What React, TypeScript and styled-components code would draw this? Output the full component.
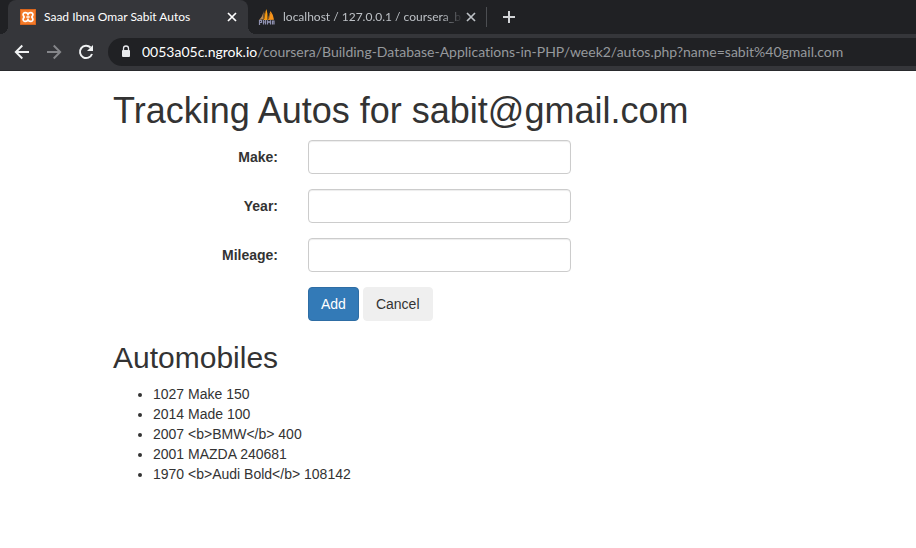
import React from 'react';
import styled, { createGlobalStyle } from 'styled-components';

const GlobalStyle = createGlobalStyle`
  *, *::before, *::after { box-sizing: border-box; }
  body {
    margin: 0;
    background: #fff;
    color: #333;
    font: 14px/20px "Liberation Sans", Arial, sans-serif;
    overflow-x: hidden;
  }
  button, input { font: inherit; color: inherit; }
`;

const Browser = styled.header`
  font-family: Lato, "Noto Sans", sans-serif;
  font-variant-ligatures: none;
  background: #35363a;
  border-bottom: 1px solid #292a2d;
`;

const TabStrip = styled.div`
  display: flex;
  height: 34px;
  padding-left: 8px;
  background: #202124;
`;

const Tab = styled.div<{ $active?: boolean }>`
  position: relative;
  display: flex;
  align-items: center;
  gap: 8px;
  width: ${p => (p.$active ? 240 : 238)}px;
  padding: 0 10px;
  padding-right: ${p => (p.$active ? 10 : 9)}px;
  padding-left: ${p => (p.$active ? 12 : 10)}px;
  border-radius: 8px 8px 0 0;
  background: ${p => (p.$active ? '#35363a' : 'transparent')};
  color: ${p => (p.$active ? '#fff' : '#bdc1c6')};

  > svg { flex: none; }

  &::before, &::after {
    content: ${p => (p.$active ? '""' : 'none')};
    position: absolute;
    bottom: 0;
    width: 8px;
    height: 8px;
  }
  &::before {
    right: 100%;
    background: radial-gradient(circle at 0 0, transparent 8px, #35363a 8px);
  }
  &::after {
    left: 100%;
    background: radial-gradient(circle at 100% 0, transparent 8px, #35363a 8px);
  }
`;

const TabTitle = styled.span<{ $fade?: boolean }>`
  flex: 1;
  min-width: 0;
  margin-right: ${p => (p.$fade ? -6 : 0)}px;
  white-space: nowrap;
  font-size: 12px;
  line-height: 16px;
  mask-image: ${p => (p.$fade ? 'linear-gradient(to right, #000 88%, transparent)' : 'none')};
`;

const IconButton = styled.button<{ $size: number }>`
  display: grid;
  place-items: center;
  flex: none;
  width: ${p => p.$size}px;
  height: ${p => p.$size}px;
  padding: 0;
  border: 0;
  border-radius: 50%;
  background: none;
  color: inherit;
`;

const Separator = styled.span`
  width: 1px;
  height: 20px;
  margin: 7px 8px 0 0;
  background: #4c4e52;
`;

const NewTab = styled(IconButton)`
  align-self: center;
  color: #d2d4d7;
`;

const Toolbar = styled.div`
  display: flex;
  align-items: center;
  gap: 4px;
  height: 36px;
  padding-left: 8px;
  color: #f1f3f4;
`;

const NavButton = styled(IconButton)`
  &:disabled { color: #85868a; }
`;

const AddressBar = styled.div`
  display: flex;
  align-items: center;
  flex: 1;
  gap: 10px;
  height: 28px;
  margin-left: 4px;
  padding-left: 12px;
  border-radius: 14px 0 0 14px;
  background: #202124;
`;

const Address = styled.div`
  flex: 1;
  overflow: hidden;
  white-space: nowrap;
  font-size: 14px;
  line-height: 20px;
  color: #96999d;
  outline: none;
`;

const Host = styled.span`
  color: #fff;
`;

const Container = styled.main`
  padding: 20px 15px 10px 113px;
`;

const Title = styled.h1`
  margin: 0 0 9px;
  font-size: 36px;
  font-weight: 400;
  line-height: 40px;
`;

const Form = styled.form`
  display: grid;
  gap: 15px;
`;

const FormRow = styled.div`
  display: grid;
  grid-template-columns: 165px minmax(0, 263px);
  column-gap: 30px;
`;

const Label = styled.label`
  padding-top: 7px;
  font-weight: 700;
  text-align: right;
`;

const TextInput = styled.input`
  width: 100%;
  height: 34px;
  padding: 6px 12px;
  border: 1px solid #ccc;
  border-radius: 4px;
  background: #fff;
  box-shadow: inset 0 1px 1px rgba(0, 0, 0, 0.075);
`;

const Actions = styled.div`
  display: flex;
  grid-column: 2;
  gap: 4px;
`;

const Button = styled.button<{ $primary?: boolean }>`
  height: 34px;
  padding: 6px 12px;
  border: 1px solid ${p => (p.$primary ? '#2e6da4' : '#efefef')};
  border-radius: 4px;
  background: ${p => (p.$primary ? '#337ab7' : '#efefef')};
  color: ${p => (p.$primary ? '#fff' : '#333')};
`;

const Subtitle = styled.h2`
  margin: 20px 0 10px;
  font-size: 30px;
  font-weight: 400;
  line-height: 33px;
`;

const AutoList = styled.ul`
  margin: 0;
  padding-left: 40px;
`;

const XamppIcon = () => (
  <svg width="16" height="16" viewBox="0 0 16 16" aria-hidden="true">
    <rect width="16" height="16" rx="1" fill="#f47b2a" />
    <rect x=".5" y=".5" width="15" height="15" rx="1" fill="none" stroke="#d9651c" />
    <path
      d="M8 5.200C7.200 3.600 6 3.600 5 3.700 3.400 3.900 2.700 5.200 3.300 6.500L4.200 8l-.9 1.500c-.6 1.300.1 2.600 1.700 2.800 1 .1 2.200.1 3-1.500.8 1.600 2 1.600 3 1.500 1.600-.2 2.300-1.500 1.700-2.800L11.800 8l.9-1.500c.6-1.300-.1-2.600-1.700-2.800-1-.1-2.200-.1-3 1.500ZM6.300 8h3.400M8 5v1.500M8 9.500V11"
      fill="none" stroke="#fff" strokeWidth="1.700" strokeLinejoin="round"
    />
  </svg>
);

const SailsIcon = () => (
  <svg width="17" height="16" viewBox="0 0 17 16" aria-hidden="true">
    <path d="M5.500 2Q5 7 1 11l4.500-.8Z" fill="#b98a55" />
    <path d="M8.500 0Q5.800 5 5.500 11h4Q10 5 8.500 0Z" fill="#f89c0e" />
    <path d="M12.500 2q-1.500 4-2.500 9l6-.3Q15 5 12.500 2Z" fill="#f7931a" />
    <path d="M7.500 2q-1 4-1.500 8M12 4q-1 3-1.500 6" stroke="#825620" fill="none" />
    <path
      d="M1.500 16v-4.500h2v2h-2M5.500 11v4.500M5.500 13h2M7.500 11v4.500M9.500 15.500V12l1.500 1.500 1.500-1.500v3.500M14.500 15.500V12H16v3.500"
      fill="none" stroke="#8f91b0" strokeWidth="1.200"
    />
  </svg>
);

const CloseIcon = () => (
  <svg width="10" height="10" viewBox="0 0 10 10" fill="none" stroke="currentColor" strokeWidth="1.700" aria-hidden="true">
    <path d="m1 1 8 8M9 1 1 9" />
  </svg>
);

const PlusIcon = () => (
  <svg width="12" height="12" viewBox="0 0 12 12" fill="none" stroke="currentColor" strokeWidth="2" aria-hidden="true">
    <path d="M6 0v12M0 6h12" />
  </svg>
);

const ArrowIcon = ({ forward = false }: { forward?: boolean }) => (
  <svg width="16" height="16" viewBox="0 0 16 16" fill="none" stroke="currentColor" strokeWidth="1.900" aria-hidden="true">
    <path d={forward ? 'M1 8h13M7.700 1.500 14.200 8l-6.500 6.500' : 'M15 8H2M8.300 1.500 1.800 8l6.500 6.500'} />
  </svg>
);

const ReloadIcon = () => (
  <svg width="16" height="16" viewBox="0 0 16 16" aria-hidden="true">
    <path d="M12.600 3.500A6.200 6.200 0 1 0 14 10" fill="none" stroke="currentColor" strokeWidth="2" />
    <path d="M15 1v6H9Z" fill="currentColor" />
  </svg>
);

const LockIcon = () => (
  <svg width="12" height="14" viewBox="0 0 12 14" aria-hidden="true">
    <path d="M3.500 6V3.500a2.500 2.500 0 0 1 5 0V6" fill="none" stroke="#e8eaed" strokeWidth="1.300" />
    <rect x="2" y="5" width="8" height="7" rx="1" fill="#e8eaed" />
  </svg>
);

const fields = [
  { id: 'make', label: 'Make:' },
  { id: 'year', label: 'Year:' },
  { id: 'mileage', label: 'Mileage:' },
];

const autos = [
  '1027 Make 150',
  '2014 Made 100',
  '2007 <b>BMW</b> 400',
  '2001 MAZDA 240681',
  '1970 <b>Audi Bold</b> 108142',
];

export default function App() {
  return (
    <>
      <GlobalStyle />
      <Browser>
        <TabStrip>
          <Tab $active>
            <XamppIcon />
            <TabTitle>Saad Ibna Omar Sabit Autos</TabTitle>
            <IconButton $size={12} type="button" aria-label="Close tab"><CloseIcon /></IconButton>
          </Tab>
          <Tab>
            <SailsIcon />
            <TabTitle $fade>localhost / 127.0.0.1 / coursera_b</TabTitle>
            <IconButton $size={12} type="button" aria-label="Close tab"><CloseIcon /></IconButton>
          </Tab>
          <Separator />
          <NewTab $size={28} type="button" aria-label="New tab"><PlusIcon /></NewTab>
        </TabStrip>
        <Toolbar>
          <NavButton $size={28} type="button" aria-label="Back"><ArrowIcon /></NavButton>
          <NavButton $size={28} type="button" aria-label="Forward" disabled><ArrowIcon forward /></NavButton>
          <NavButton $size={28} type="button" aria-label="Reload"><ReloadIcon /></NavButton>
          <AddressBar>
            <LockIcon />
            <Address role="textbox" aria-label="Address" contentEditable suppressContentEditableWarning spellCheck={false}>
              <Host>0053a05c.ngrok.io</Host>/coursera/Building-Database-Applications-in-PHP/week2/autos.php?name=sabit%40gmail.com
            </Address>
          </AddressBar>
        </Toolbar>
      </Browser>
      <Container>
        <Title>Tracking Autos for sabit@gmail.com</Title>
        <Form onSubmit={event => event.preventDefault()}>
          {fields.map(field => (
            <FormRow key={field.id}>
              <Label htmlFor={field.id}>{field.label}</Label>
              <TextInput id={field.id} name={field.id} type="text" />
            </FormRow>
          ))}
          <FormRow>
            <Actions>
              <Button $primary type="submit">Add</Button>
              <Button type="button">Cancel</Button>
            </Actions>
          </FormRow>
        </Form>
        <Subtitle>Automobiles</Subtitle>
        <AutoList>
          {autos.map(auto => <li key={auto}>{auto}</li>)}
        </AutoList>
      </Container>
    </>
  );
}
